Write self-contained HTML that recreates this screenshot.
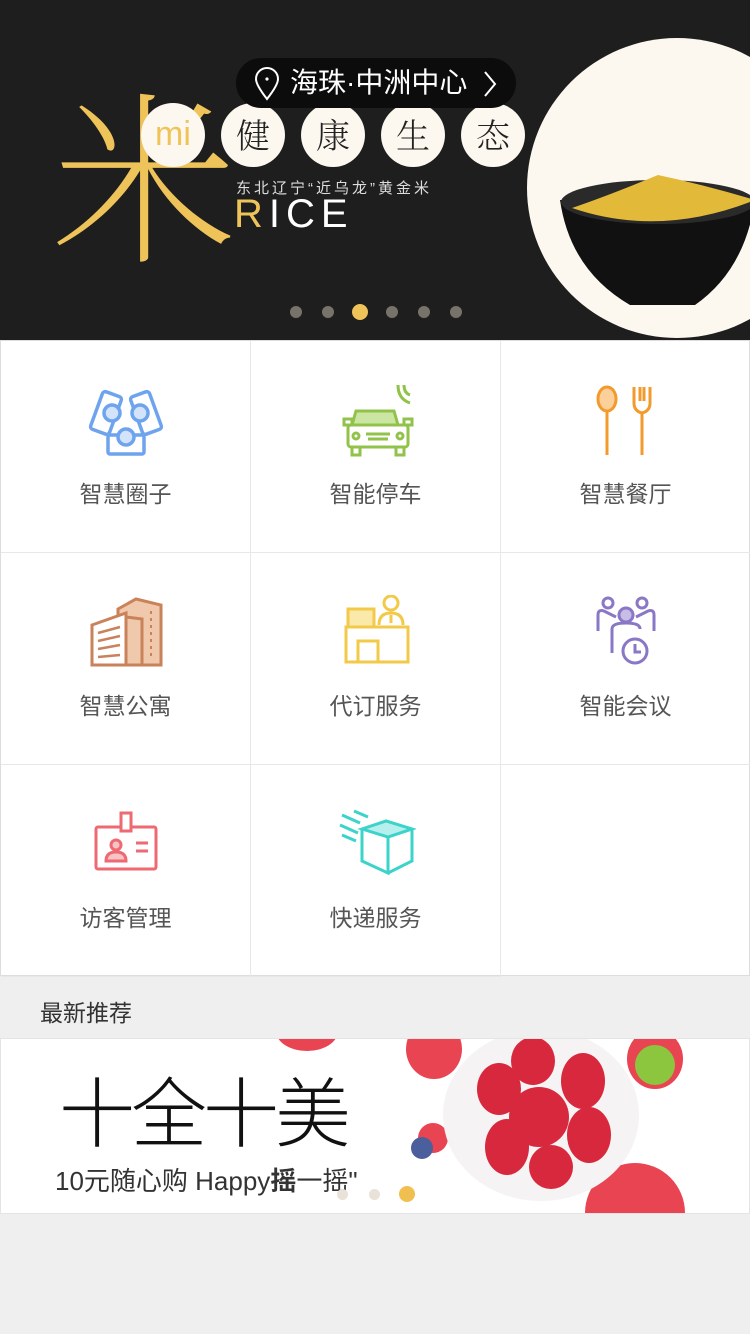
<!DOCTYPE html>
<html><head><meta charset="utf-8"><style>
*{margin:0;padding:0;box-sizing:border-box}
body{width:750px;height:1334px;background:#efefef;font-family:"Liberation Sans","Noto Sans CJK SC",sans-serif;overflow:hidden;position:relative}
.banner{position:absolute;left:0;top:0;width:750px;height:340px;background:#1e1e1e;overflow:hidden}
.grid{position:absolute;left:0;top:340px;width:750px;height:636px;background:#fff;border:1px solid #ddd}
.cell{position:absolute;width:250px;height:212px;border-right:1px solid #e8e8e8;border-bottom:1px solid #e8e8e8}
.cell svg{position:absolute;left:85px;top:42px}
.cell .t{position:absolute;top:134px;width:100%;text-align:center;font-size:23px;color:#555}
.circ{position:absolute;top:103px;width:64px;height:64px;border-radius:50%;background:#fdf8ef;font-family:"Noto Serif CJK SC",serif;font-size:34px;line-height:62px;text-align:center;color:#222;font-weight:300}
.dot{position:absolute;top:306px;width:12px;height:12px;border-radius:50%;background:#77736a}
</style></head><body>
<div class="banner">
  <div style="position:absolute;left:527px;top:38px;width:300px;height:300px;border-radius:50%;background:#fdf8ef"></div>
  <svg style="position:absolute;left:540px;top:160px" width="210" height="160">
    <path d="M20 40 Q30 110 90 145 L155 145 Q205 110 215 40Z" fill="#111"/>
    <ellipse cx="118" cy="42" rx="97" ry="22" fill="#2a2a2a"/>
    <path d="M32 48 Q70 35 118 15 Q165 25 215 40 Q120 78 32 48Z" fill="#e3b93a"/>
  </svg>
  <div style="position:absolute;left:52px;top:68px;font-family:'Noto Serif CJK SC',serif;font-size:185px;line-height:200px;color:#eec35a;font-weight:200">米</div>
  <div class="circ" style="left:141px;color:#eec35a;font-family:'Liberation Sans',sans-serif">mi</div>
  <div class="circ" style="left:221px">健</div>
  <div class="circ" style="left:301px">康</div>
  <div class="circ" style="left:381px">生</div>
  <div class="circ" style="left:461px">态</div>
  <div style="position:absolute;left:236px;top:58px;width:280px;height:50px;border-radius:25px;background:#0c0c0c"></div>
  <svg style="position:absolute;left:254px;top:67px" width="26" height="34"><path d="M13 32 Q2 18 2 12 A11 11 0 0 1 24 12 Q24 18 13 32Z" fill="none" stroke="#fff" stroke-width="2"/><circle cx="13" cy="12" r="1.6" fill="#fff"/></svg>
  <div style="position:absolute;left:290px;top:64px;font-size:28px;line-height:38px;color:#fff">海珠·中洲中心</div>
  <svg style="position:absolute;left:482px;top:70px" width="16" height="28"><path d="M3 2 L13 14 L3 26" fill="none" stroke="#fff" stroke-width="2"/></svg>
  <div style="position:absolute;left:236px;top:177px;font-size:15px;letter-spacing:3px;color:#ddd">东北辽宁“近乌龙”黄金米</div>
  <div style="position:absolute;left:234px;top:192px;font-size:40px;letter-spacing:6px;color:#fff;font-weight:300"><span style="color:#eec35a">R</span>ICE</div>
  <div class="dot" style="left:290px"></div><div class="dot" style="left:322px"></div>
  <div class="dot" style="left:352px;width:16px;height:16px;top:304px;background:#eec35a"></div>
  <div class="dot" style="left:386px"></div><div class="dot" style="left:418px"></div><div class="dot" style="left:450px"></div>
</div>
<div class="grid">
  <div class="cell" style="left:0;top:0">
    <svg width="80" height="80"><g stroke="#6ea4ee" stroke-width="3.5" fill="#d3e3fa">
      <rect x="10" y="10" width="20" height="40" rx="3" transform="rotate(20 20 30)" fill="none"/>
      <rect x="50" y="10" width="20" height="40" rx="3" transform="rotate(-20 60 30)" fill="none"/>
      <circle cx="26" cy="30" r="8"/><circle cx="54" cy="30" r="8"/>
      <rect x="22" y="52" width="36" height="19" rx="2" fill="none"/><circle cx="40" cy="54" r="8"/></g></svg>
    <div class="t">智慧圈子</div></div>
  <div class="cell" style="left:250px;top:0">
    <svg width="80" height="80"><g stroke="#91c24a" stroke-width="3" fill="none">
      <path d="M62 2 Q62 16 74 20 M68 2 Q68 10 74 12"/>
      <path d="M16 42 L20 28 L58 28 L62 42Z" fill="#cbe5a3"/>
      <rect x="12" y="42" width="60" height="22" rx="3"/><rect x="8" y="36" width="8" height="6"/><rect x="68" y="36" width="8" height="6"/>
      <rect x="16" y="64" width="8" height="8"/><rect x="60" y="64" width="8" height="8"/>
      <circle cx="20" cy="53" r="3"/><circle cx="64" cy="53" r="3"/><path d="M30 51 H54 M32 56 H52"/></g></svg>
    <div class="t">智能停车</div></div>
  <div class="cell" style="left:500px;top:0">
    <svg width="80" height="80"><g stroke="#f39a2d" stroke-width="3" fill="none">
      <ellipse cx="21" cy="16" rx="9" ry="12" fill="#fcd09a"/><path d="M21 28 V72"/>
      <path d="M48 4 V20 Q48 28 56 30 Q64 28 64 20 V4 M54 4 V18 M58 4 V18 M56 30 V72"/></g></svg>
    <div class="t">智慧餐厅</div></div>
  <div class="cell" style="left:0;top:212px">
    <svg width="80" height="80"><g stroke="#c9825a" stroke-width="3" fill="none">
      <path d="M32 14 L50 4 L75 10 V70 H32Z" fill="#f0c9ac"/>
      <path d="M6 30 L40 18 V70 H6Z" fill="#fff"/>
      <path d="M40 22 L56 24 V70"/><path d="M12 38 L34 32 M12 46 L34 41 M12 54 L34 50 M12 62 L34 60" stroke-width="2.5"/>
      <path d="M65 16 V64" stroke-dasharray="3 4" stroke-width="2"/></g></svg>
    <div class="t">智慧公寓</div></div>
  <div class="cell" style="left:250px;top:212px">
    <svg width="80" height="80"><g stroke="#f3c94a" stroke-width="3" fill="none">
      <circle cx="55" cy="8" r="7"/><path d="M43 30 Q43 18 55 18 Q67 18 67 30"/><path d="M55 20 V28"/>
      <rect x="12" y="14" width="26" height="18" fill="#fbe9a9"/>
      <rect x="10" y="32" width="62" height="35"/><rect x="22" y="46" width="20" height="21"/></g></svg>
    <div class="t">代订服务</div></div>
  <div class="cell" style="left:500px;top:212px">
    <svg width="80" height="80"><g stroke="#8a77c6" stroke-width="3" fill="none">
      <circle cx="22" cy="8" r="5"/><circle cx="56" cy="8" r="5"/><circle cx="40" cy="20" r="7" fill="#c8bde6"/>
      <path d="M12 36 V20 Q12 14 18 16 L30 22 M68 36 V20 Q68 14 62 16 L50 22 M26 58 V34 Q26 28 40 28 Q54 28 54 34"/>
      <circle cx="49" cy="56" r="12" fill="#fff"/><path d="M49 49 V57 H55"/></g></svg>
    <div class="t">智能会议</div></div>
  <div class="cell" style="left:0;top:424px">
    <svg width="80" height="80"><g stroke="#ee6a72" stroke-width="3" fill="none">
      <rect x="10" y="20" width="60" height="42" rx="2"/><rect x="35" y="6" width="10" height="18" fill="#fff"/>
      <circle cx="30" cy="38" r="5" fill="#f7c3c6"/><path d="M20 54 Q20 45 30 45 Q40 45 40 54Z" fill="#f7c3c6"/>
      <path d="M50 36 H62 M50 44 H62"/></g></svg>
    <div class="t">访客管理</div></div>
  <div class="cell" style="left:250px;top:424px">
    <svg width="80" height="80"><g stroke="#3bd3ca" stroke-width="3" fill="none">
      <path d="M26 22 L50 14 L76 22 L52 30Z" fill="#b6efeb"/><path d="M26 22 V54 L52 66 V30 M76 22 V54 L52 66"/>
      <path d="M4 18 L22 26 M6 8 L24 16 M18 4 L32 10 M6 28 L20 34"/></g></svg>
    <div class="t">快递服务</div></div>
</div>
<div style="position:absolute;left:40px;top:994px;font-size:23px;color:#333">最新推荐</div>
<div style="position:absolute;left:0;top:1038px;width:750px;height:176px;background:#fff;border:1px solid #e4e4e4;overflow:hidden">
  <div style="position:absolute;left:275px;top:-28px;width:62px;height:40px;border-radius:50%;background:#e94452"></div>
  <div style="position:absolute;left:405px;top:-20px;width:56px;height:60px;border-radius:50%;background:#e94452"></div>
  <div style="position:absolute;left:626px;top:-10px;width:56px;height:60px;border-radius:50%;background:#e94452"></div>
  <div style="position:absolute;left:634px;top:6px;width:40px;height:40px;border-radius:50%;background:#8cc63f"></div>
  <div style="position:absolute;left:417px;top:84px;width:30px;height:30px;border-radius:50%;background:#e94452"></div>
  <div style="position:absolute;left:410px;top:98px;width:22px;height:22px;border-radius:50%;background:#4b5f9c"></div>
  <div style="position:absolute;left:584px;top:124px;width:100px;height:100px;border-radius:50%;background:#e94452"></div>
  <div style="position:absolute;left:442px;top:-10px;width:196px;height:172px;border-radius:50%;background:#f5f3f3"></div>
  <svg style="position:absolute;left:470px;top:0" width="150" height="150"><g fill="#d8283e">
    <ellipse cx="62" cy="22" rx="22" ry="24"/><ellipse cx="28" cy="50" rx="22" ry="26"/><ellipse cx="112" cy="42" rx="22" ry="28"/>
    <ellipse cx="68" cy="78" rx="30" ry="30"/><ellipse cx="36" cy="108" rx="22" ry="28"/><ellipse cx="118" cy="96" rx="22" ry="28"/><ellipse cx="80" cy="128" rx="22" ry="22"/></g></svg>
  <div style="position:absolute;left:58px;top:34px;font-size:76px;line-height:86px;color:#111;font-weight:300;letter-spacing:-4px">十全十美</div>
  <div style="position:absolute;left:54px;top:122px;font-size:26px;color:#333">10元随心购 Happy<b>摇</b>一摇"</div>
  <div style="position:absolute;left:336px;top:150px;width:11px;height:11px;border-radius:50%;background:#e8e2d8"></div>
  <div style="position:absolute;left:368px;top:150px;width:11px;height:11px;border-radius:50%;background:#e8e2d8"></div>
  <div style="position:absolute;left:398px;top:147px;width:16px;height:16px;border-radius:50%;background:#efc050"></div>
</div>
</body></html>
